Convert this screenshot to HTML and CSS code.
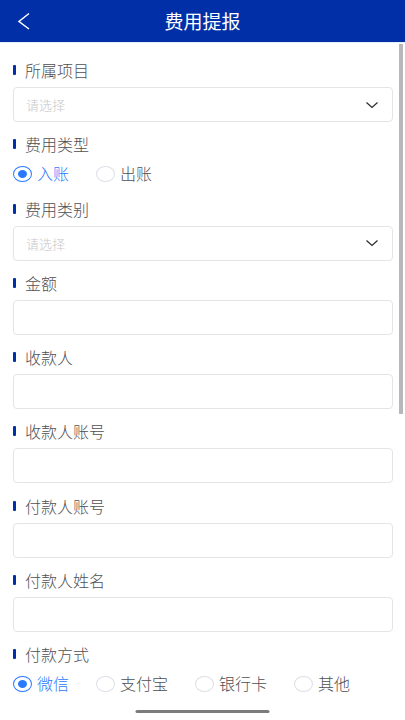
FILE: index.html
```
<!DOCTYPE html>
<html lang="zh-CN">
<head>
<meta charset="utf-8">
<meta name="viewport" content="width=device-width, initial-scale=1">
<title>费用提报</title>
<link rel="stylesheet" href="styles.css">
</head>
<body>
<header class="topbar">
  <button class="back" type="button" aria-label="返回">
    <svg width="14" height="18" viewBox="0 0 14 18"><path d="M12 1.500 2 9.500 12 17"/></svg>
  </button>
  <h1 class="title">费用提报</h1>
</header>
<form class="form">
  <div class="field">
    <label class="label" for="project">所属项目</label>
    <div class="select-wrap">
      <select class="control select" id="project"><option>请选择</option></select>
      <svg class="chevron" width="12" height="8" viewBox="0 0 12 8"><path d="M.5 1.500 6 6.500 11.500 1.500"/></svg>
    </div>
  </div>
  <fieldset class="field">
    <legend class="label">费用类型</legend>
    <div class="options">
      <label class="option"><input class="radio" type="radio" name="type" checked><span>入账</span></label>
      <label class="option"><input class="radio" type="radio" name="type"><span>出账</span></label>
    </div>
  </fieldset>
  <div class="field">
    <label class="label" for="category">费用类别</label>
    <div class="select-wrap">
      <select class="control select" id="category"><option>请选择</option></select>
      <svg class="chevron" width="12" height="8" viewBox="0 0 12 8"><path d="M.5 1.500 6 6.500 11.500 1.500"/></svg>
    </div>
  </div>
  <div class="field">
    <label class="label" for="amount">金额</label>
    <input class="control" id="amount" type="text">
  </div>
  <div class="field">
    <label class="label" for="payee">收款人</label>
    <input class="control" id="payee" type="text">
  </div>
  <div class="field">
    <label class="label" for="payee-account">收款人账号</label>
    <input class="control" id="payee-account" type="text">
  </div>
  <div class="field">
    <label class="label" for="payer-account">付款人账号</label>
    <input class="control" id="payer-account" type="text">
  </div>
  <div class="field">
    <label class="label" for="payer-name">付款人姓名</label>
    <input class="control" id="payer-name" type="text">
  </div>
  <fieldset class="field">
    <legend class="label">付款方式</legend>
    <div class="options">
      <label class="option"><input class="radio" type="radio" name="method" checked><span>微信</span></label>
      <label class="option"><input class="radio" type="radio" name="method"><span>支付宝</span></label>
      <label class="option"><input class="radio" type="radio" name="method"><span>银行卡</span></label>
      <label class="option"><input class="radio" type="radio" name="method"><span>其他</span></label>
    </div>
  </fieldset>
</form>
<div class="scroll-thumb"></div>
<div class="home-bar"></div>
</body>
</html>
```
FILE: styles.css
```
* {
  box-sizing: border-box;
}

body {
  margin: 0;
  min-height: 100vh;
  display: flex;
  flex-direction: column;
  background: #fff;
  color: #505052;
  font-family: "Noto Sans CJK SC", sans-serif;
  font-size: 16px;
  font-weight: 300;
}

.topbar {
  height: 42px;
  flex: none;
  display: grid;
  grid-template-columns: 48px 1fr 48px;
  align-items: center;
  background: #002fa7;
  color: #fff;
  box-shadow: 0 1px 0 #e3effc;
}

.back {
  display: flex;
  height: 42px;
  align-items: center;
  padding: 0 0 0 17px;
  border: 0;
  background: none;
}

.back svg,
.chevron {
  fill: none;
  stroke: #fff;
  stroke-width: 1.5;
}

.title {
  margin: 0;
  font-size: 19px;
  line-height: 42px;
  font-weight: 400;
  text-align: center;
}

.form {
  flex: 1;
  display: flex;
  flex-direction: column;
  justify-content: space-between;
  padding: 17px 12px 24px 13px;
}

.field {
  min-width: 0;
  margin: 0;
  padding: 0;
  border: 0;
}

.label {
  display: flex;
  align-items: center;
  gap: 9px;
  margin-bottom: 6px;
  padding: 0;
  line-height: 22px;
}

.label::before {
  content: "";
  width: 3px;
  height: 10px;
  border-radius: 1px;
  background: #002fa7;
}

.control {
  display: block;
  width: 100%;
  height: 35px;
  padding: 0 12px;
  border: 1px solid #e4e4e6;
  border-radius: 4px;
  background: #fff;
  color: #505052;
  font: inherit;
}

.select {
  appearance: none;
  color: #c8c8ca;
  font-size: 13px;
}

.select-wrap {
  display: grid;
  align-items: center;
}

.select-wrap > * {
  grid-area: 1 / 1;
}

.chevron {
  justify-self: end;
  margin-right: 15px;
  stroke: #2c2c2e;
  stroke-width: 1.2;
  pointer-events: none;
}

.options {
  display: flex;
  gap: 27px;
}

.option {
  display: flex;
  align-items: center;
  gap: 5px;
  height: 25px;
  line-height: 25px;
}

.radio {
  appearance: none;
  display: grid;
  place-items: center;
  width: 19px;
  height: 16px;
  margin: 0;
  border: 1px solid #dcdfe6;
  border-radius: 50%;
}

.radio:checked {
  border-color: #2979ff;
}

.radio:checked::before {
  content: "";
  width: 9px;
  height: 8px;
  border-radius: 50%;
  background: #2979ff;
}

.radio:checked + span {
  color: #2979ff;
}

.scroll-thumb {
  position: absolute;
  top: 44px;
  right: 2px;
  width: 4px;
  height: 370px;
  background: #b8b8b8;
}

.home-bar {
  position: fixed;
  bottom: 7px;
  left: 50%;
  width: 33.333%;
  height: 3px;
  border-radius: 2px;
  background: #7b7d7b;
  transform: translateX(-50%);
}
```
